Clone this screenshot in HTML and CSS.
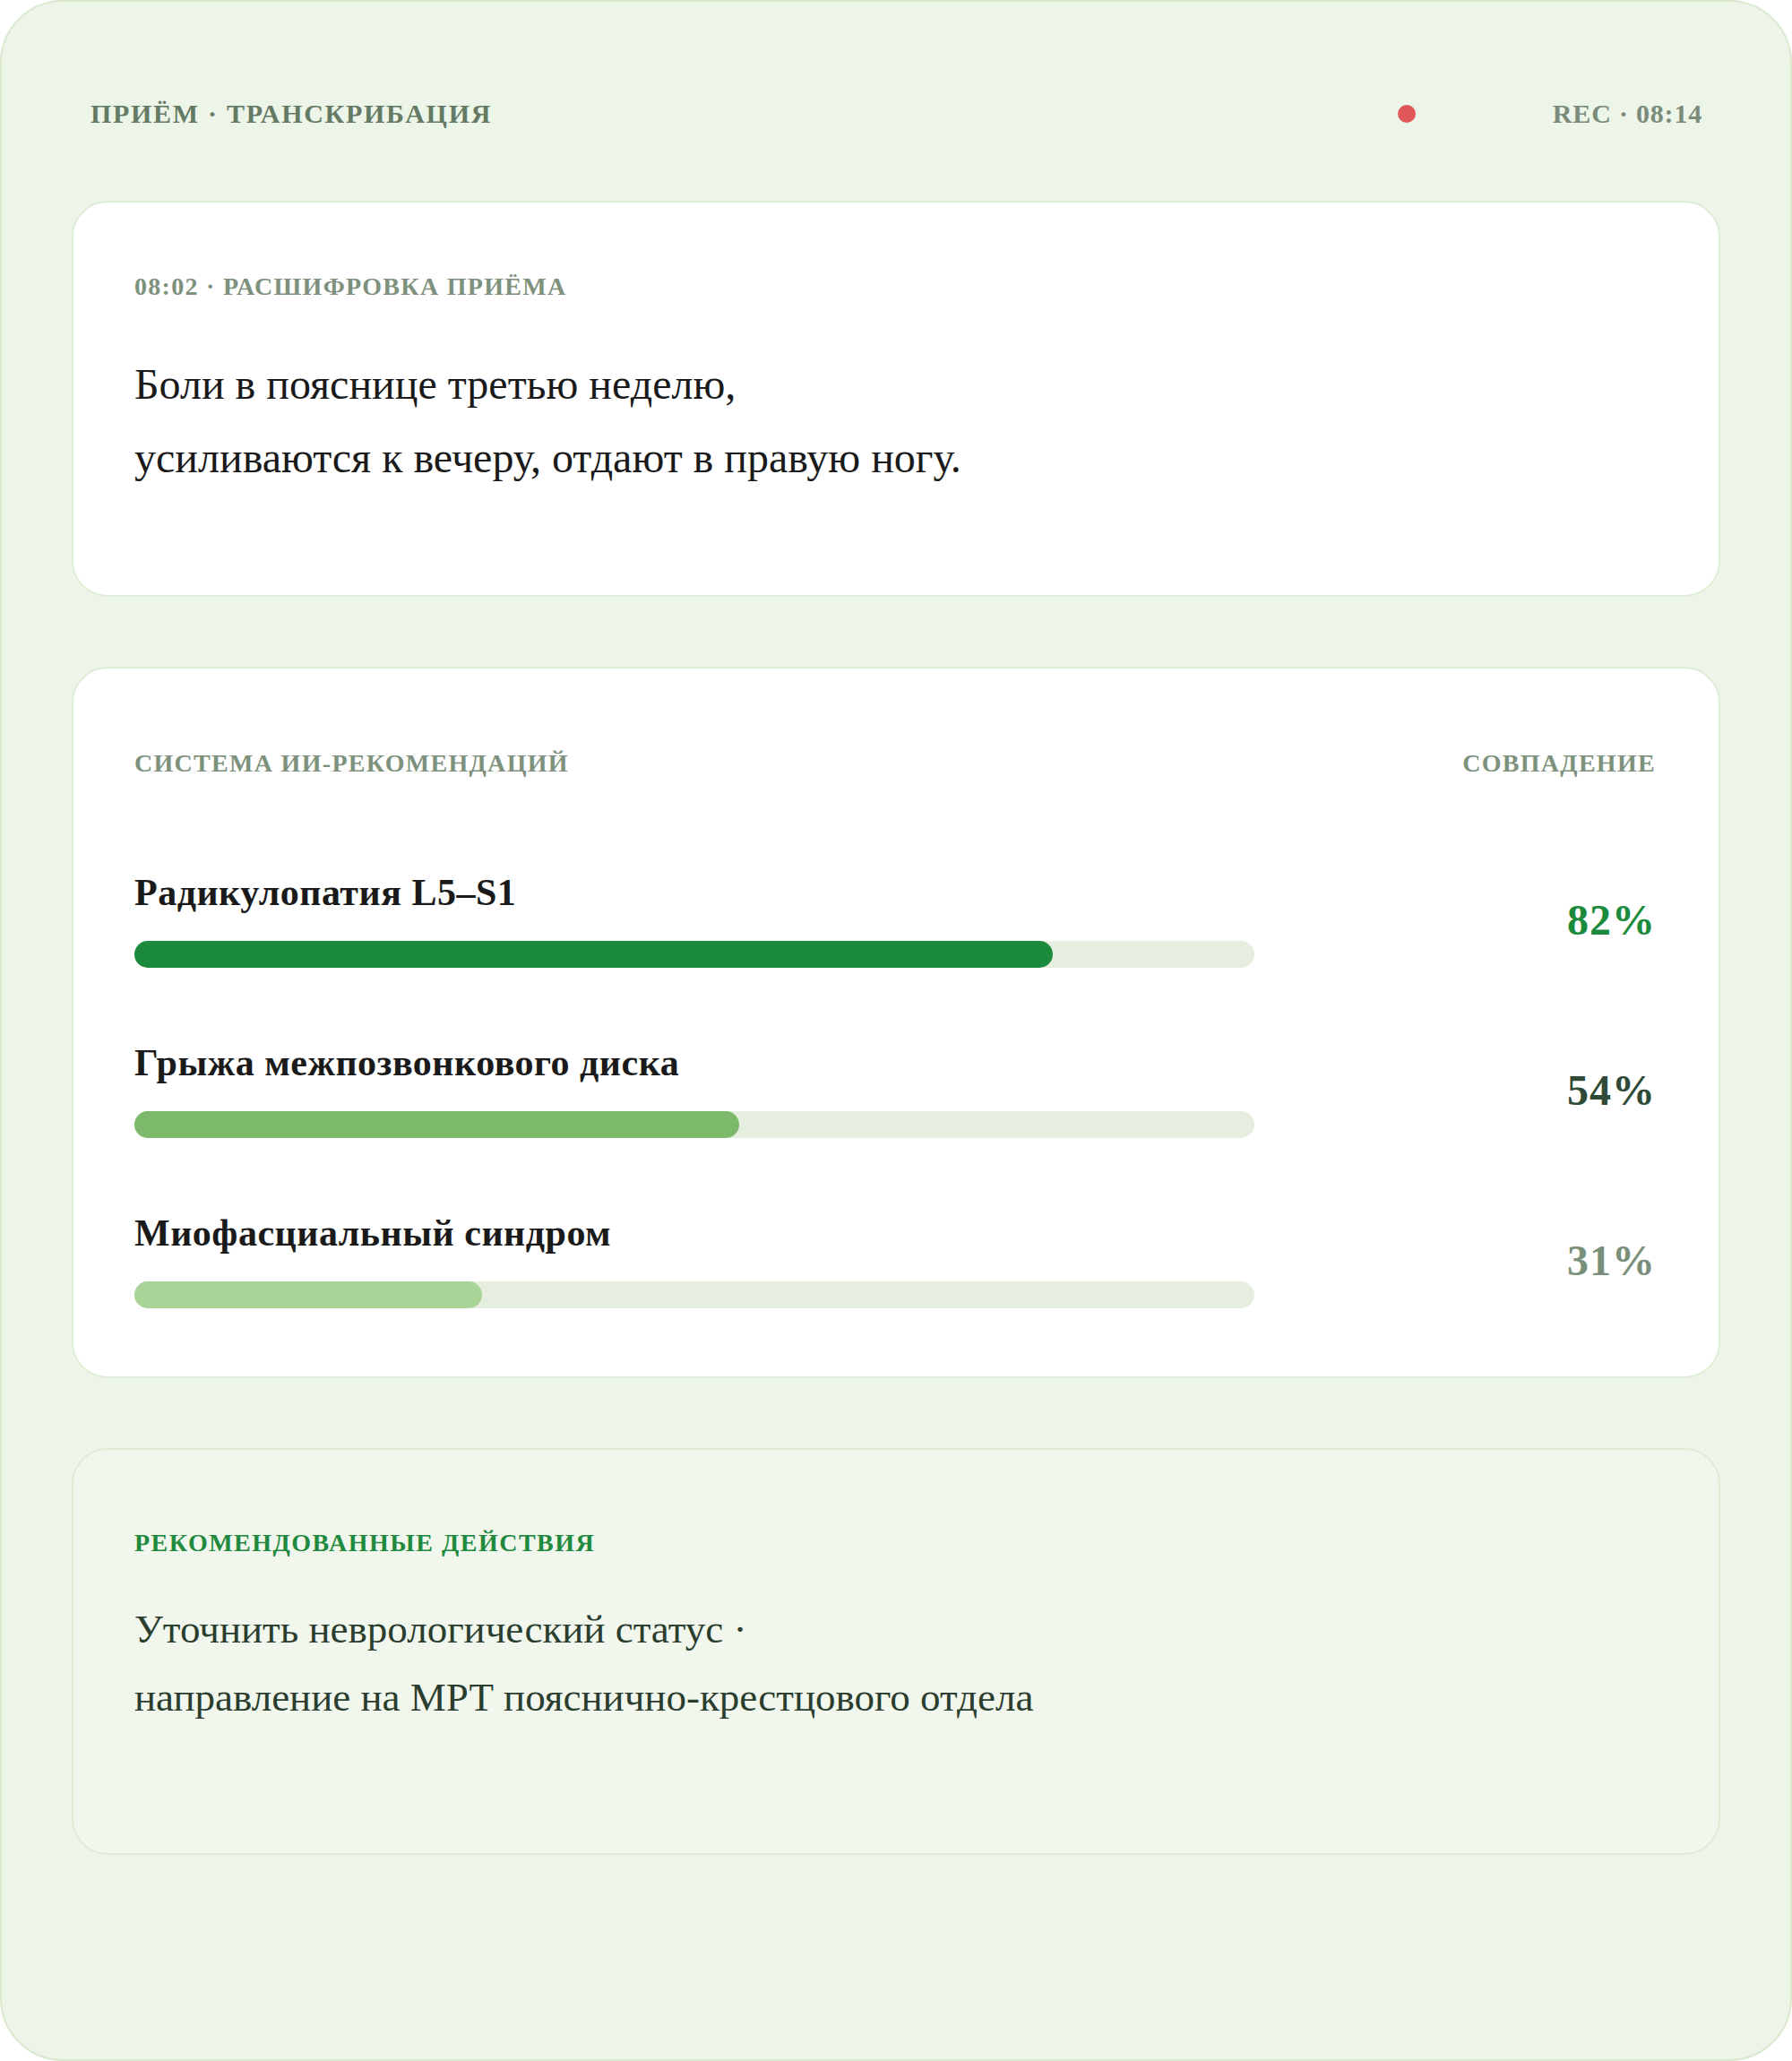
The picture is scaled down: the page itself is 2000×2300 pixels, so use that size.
FILE: index.html
```html
<!DOCTYPE html>
<html>
<head>
    <link rel="stylesheet" href="styles.css">
</head>
<body>
    <div class="frame">
        <div class="topbar">
            <span class="topbar-title">ПРИЁМ · ТРАНСКРИБАЦИЯ</span>
            <div class="rec">
                <span class="rec-dot"></span>
                <span class="rec-time">REC · 08:14</span>
            </div>
        </div>

        <div class="card transcript">
            <div class="label">08:02 · РАСШИФРОВКА ПРИЁМА</div>
            <p class="transcript-text">Боли в пояснице третью неделю,<br>усиливаются к вечеру, отдают в правую ногу.</p>
        </div>

        <div class="card suggestions">
            <div class="card-head">
                <span class="label">СИСТЕМА ИИ-РЕКОМЕНДАЦИЙ</span>
                <span class="label">СОВПАДЕНИЕ</span>
            </div>

            <div class="diag-list">
                <div class="diag">
                    <div class="diag-main">
                        <div class="diag-name">Радикулопатия L5–S1</div>
                        <div class="track"><div class="fill fill-high" style="width: 82%"></div></div>
                    </div>
                    <div class="diag-score score-high">82%</div>
                </div>
                <div class="diag">
                    <div class="diag-main">
                        <div class="diag-name">Грыжа межпозвонкового диска</div>
                        <div class="track"><div class="fill fill-mid" style="width: 54%"></div></div>
                    </div>
                    <div class="diag-score score-mid">54%</div>
                </div>
                <div class="diag">
                    <div class="diag-main">
                        <div class="diag-name">Миофасциальный синдром</div>
                        <div class="track"><div class="fill fill-low" style="width: 31%"></div></div>
                    </div>
                    <div class="diag-score score-low">31%</div>
                </div>
            </div>
        </div>

        <div class="card actions">
            <div class="label label-green">РЕКОМЕНДОВАННЫЕ ДЕЙСТВИЯ</div>
            <p class="actions-text">Уточнить неврологический статус ·<br>направление на МРТ пояснично-крестцового отдела</p>
        </div>
    </div>
</body>
</html>
```

FILE: styles.css
```css
body {
    margin: 0;
    background: #ffffff;
    font-family: "Liberation Serif", "Times New Roman", serif;
}

.frame {
    box-sizing: border-box;
    width: 2000px;
    height: 2300px;
    background: #edf5e9;
    border: 2px solid #d8e9cd;
    border-radius: 70px;
    padding: 108px 78px 0;
}

.topbar {
    display: flex;
    justify-content: space-between;
    align-items: center;
    padding: 0 20px 0 21px;
    margin-bottom: 80px;
    font-size: 30px;
    font-weight: bold;
}

.topbar-title {
    color: #647a64;
    letter-spacing: 1.7px;
}

.rec {
    display: flex;
    align-items: center;
    gap: 153px;
}

.rec-dot {
    width: 20px;
    height: 20px;
    border-radius: 50%;
    background: #e05757;
}

.rec-time {
    color: #7a8b7a;
    letter-spacing: 0.8px;
}

.card {
    background: #ffffff;
    border: 2px solid #deedd5;
    border-radius: 40px;
    padding: 0 70px 0 68px;
}

.label {
    font-size: 28px;
    font-weight: bold;
    letter-spacing: 1.3px;
    color: #7d917d;
}

.label-green {
    color: #1f8a3e;
    letter-spacing: 1.5px;
}

.transcript {
    padding-top: 78px;
    padding-bottom: 112px;
    margin-bottom: 78px;
}

.transcript-text {
    margin: 52px 0 0;
    font-size: 48px;
    line-height: 82px;
    color: #1a1a1a;
}

.suggestions {
    padding-top: 90px;
    padding-bottom: 76px;
    margin-bottom: 78px;
}

.card-head {
    display: flex;
    justify-content: space-between;
}

.diag-list {
    display: flex;
    flex-direction: column;
    gap: 82px;
    margin-top: 104px;
}

.diag {
    display: flex;
    align-items: center;
    justify-content: space-between;
}

.diag-main {
    width: 1250px;
}

.diag-name {
    font-size: 42px;
    font-weight: bold;
    letter-spacing: 0.5px;
    color: #1a1a1a;
}

.track {
    height: 30px;
    margin-top: 30px;
    border-radius: 15px;
    background: #e6eee0;
}

.fill {
    height: 100%;
    border-radius: 15px;
}

.fill-high {
    background: #1c8a3c;
}

.fill-mid {
    background: #7cb96a;
}

.fill-low {
    background: #a8d498;
}

.diag-score {
    font-size: 48px;
    font-weight: bold;
    letter-spacing: 1px;
}

.score-high {
    color: #1c8a3c;
}

.score-mid {
    color: #2f4a36;
}

.score-low {
    color: #7a8f7a;
}

.actions {
    background: #f1f7ed;
    padding-top: 88px;
    padding-bottom: 136px;
}

.actions-text {
    margin: 42px 0 0;
    font-size: 45px;
    line-height: 76px;
    color: #2a3d2e;
}
```
